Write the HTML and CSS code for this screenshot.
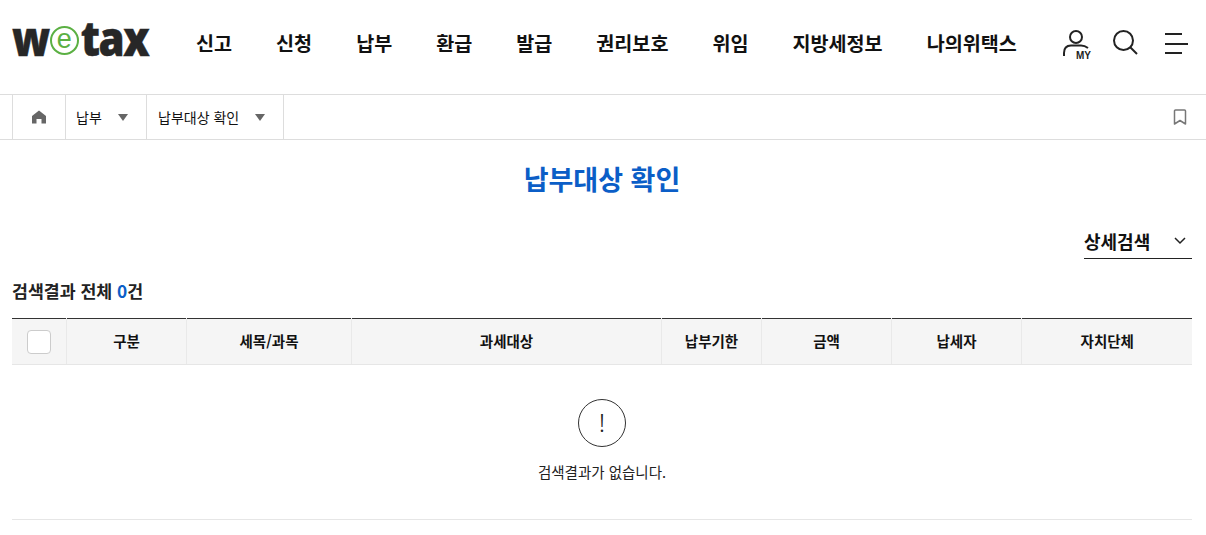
FILE: index.html
```html
<!DOCTYPE html>
<html lang="ko">
<head>
    <meta charset="UTF-8">
    <meta name="viewport" content="width=device-width, initial-scale=1.0">
    <title>납부대상 확인</title>
    <link rel="stylesheet" href="styles.css">
</head>
<body>
    <header class="header">
        <a class="logo"><span class="logo-txt">w</span><span class="logo-e">e</span><span class="logo-txt">tax</span></a>
        <nav class="gnb">
            <a>신고</a>
            <a>신청</a>
            <a>납부</a>
            <a>환급</a>
            <a>발급</a>
            <a>권리보호</a>
            <a>위임</a>
            <a>지방세정보</a>
            <a>나의위택스</a>
        </nav>
        <div class="util">
            <a class="util-my">
                <svg width="32" height="32" viewBox="0 0 32 32" fill="none" stroke="#222" stroke-width="2">
                    <circle cx="13" cy="8" r="6"/>
                    <path d="M1 27v-3c0-5 3-7.500 7-7.500h10c3 0 5 1 7 2.500"/>
                </svg>
                <span class="my-label">MY</span>
            </a>
            <a class="util-search">
                <svg width="26" height="26" viewBox="0 0 26 26" fill="none" stroke="#222" stroke-width="2">
                    <circle cx="10.500" cy="10.500" r="9.500"/>
                    <path d="M17.500 17.500l6.500 6.500"/>
                </svg>
            </a>
            <a class="util-menu">
                <span class="bar short"></span>
                <span class="bar"></span>
                <span class="bar short"></span>
            </a>
        </div>
    </header>

    <div class="crumbs">
        <a class="crumb crumb-home">
            <svg width="14" height="14" viewBox="0 0 14 14" fill="#666">
                <path d="M7 .5L14 6v7.500H9.500V9h-5v4.500H0V6z"/>
            </svg>
        </a>
        <a class="crumb crumb-one">납부<i class="arrow"></i></a>
        <a class="crumb crumb-two">납부대상 확인<i class="arrow"></i></a>
        <a class="bookmark">
            <svg width="14" height="16" viewBox="0 0 14 16" fill="none" stroke="#777" stroke-width="1.500" stroke-linejoin="round">
                <path d="M1.500 2a1 1 0 0 1 1-1h9a1 1 0 0 1 1 1v13L7 11.500 1.500 15z"/>
            </svg>
        </a>
    </div>

    <main class="content">
        <h1 class="page-title">납부대상 확인</h1>

        <div class="search-toggle-row">
            <a class="search-toggle">
                상세검색
                <svg width="12" height="8" viewBox="0 0 12 8" fill="none" stroke="#222" stroke-width="1.500">
                    <path d="M1 1l5 5 5-5"/>
                </svg>
            </a>
        </div>

        <p class="result-count">검색결과 전체 <em>0</em>건</p>

        <table class="result-table">
            <colgroup>
                <col class="c-check">
                <col class="c-type">
                <col class="c-item">
                <col class="c-target">
                <col class="c-date">
                <col class="c-amount">
                <col class="c-payer">
                <col>
            </colgroup>
            <thead>
                <tr>
                    <th><span class="check"></span></th>
                    <th>구분</th>
                    <th>세목/과목</th>
                    <th>과세대상</th>
                    <th>납부기한</th>
                    <th>금액</th>
                    <th>납세자</th>
                    <th>자치단체</th>
                </tr>
            </thead>
        </table>

        <div class="empty">
            <div class="empty-icon">!</div>
            <p>검색결과가 없습니다.</p>
        </div>
    </main>
</body>
</html>
```

FILE: styles.css
```css
* {
    box-sizing: border-box;
}
body {
    margin: 0;
    background: #fff;
    color: #222;
    font-family: "Noto Sans CJK KR", "Noto Sans", sans-serif;
    overflow: hidden;
}
a {
    color: inherit;
    text-decoration: none;
}

/* header */
.header {
    display: flex;
    align-items: center;
    height: 95px;
    padding: 0 18px 10px 12px;
    border-bottom: 1px solid #ddd;
}
.logo {
    display: flex;
    align-items: center;
    width: 184px;
    margin-top: -8px;
    font-family: "Open Sans", sans-serif;
    font-size: 42px;
    font-weight: 800;
    line-height: 50px;
    letter-spacing: -1.500px;
    color: #272727;
}
.logo-txt {
    display: inline-block;
    transform: scaleY(1.150);
    -webkit-text-stroke: 0.400px #272727;
}
.logo-e {
    width: 29px;
    height: 29px;
    margin: 5px 2px 0 1px;
    border: 2px solid #5bb043;
    border-radius: 50%;
    color: #5bb043;
    font-family: "Liberation Sans", sans-serif;
    font-size: 27px;
    font-weight: 400;
    line-height: 23px;
    letter-spacing: 0;
    text-align: center;
}
.gnb {
    display: flex;
    gap: 44px;
    font-size: 19.600px;
    font-weight: 700;
    color: #111;
    white-space: nowrap;
}
.util {
    display: flex;
    align-items: center;
    margin-left: auto;
}
.util-my {
    position: relative;
    display: block;
    width: 32px;
    height: 32px;
    margin-top: 5px;
}
.my-label {
    position: absolute;
    right: 4px;
    bottom: 1px;
    padding-left: 2px;
    background: #fff;
    font-family: "Liberation Sans", sans-serif;
    font-size: 10px;
    font-weight: 700;
    line-height: 9px;
}
.util-search {
    display: block;
    height: 26px;
    margin-left: 18px;
    margin-top: 2px;
}
.util-menu {
    display: flex;
    flex-direction: column;
    gap: 7.500px;
    width: 23px;
    margin-left: 26px;
    margin-top: 3px;
}
.bar {
    height: 2px;
    background: #222;
}
.bar.short {
    width: 17px;
}

/* breadcrumb */
.crumbs {
    display: flex;
    height: 45px;
    padding: 0 19px 0 12px;
    border-bottom: 1px solid #ddd;
    font-size: 14px;
    color: #111;
}
.crumb {
    display: flex;
    align-items: center;
    border-left: 1px solid #ddd;
}
.crumb-home {
    justify-content: center;
    width: 53px;
}
.crumb-one {
    width: 81px;
    padding-left: 10px;
}
.crumb-two {
    width: 138px;
    padding-left: 11px;
    border-right: 1px solid #ddd;
}
.arrow {
    width: 0;
    height: 0;
    margin-left: 16px;
    margin-top: 1px;
    border-top: 7px solid #666;
    border-left: 5.500px solid transparent;
    border-right: 5.500px solid transparent;
}
.bookmark {
    display: flex;
    align-items: center;
    margin-left: auto;
}

/* content */
.content {
    padding: 0 14px 0 12px;
}
.page-title {
    margin: 0;
    padding-top: 19px;
    color: #0b5ec7;
    font-size: 27px;
    font-weight: 700;
    line-height: 40px;
    text-align: center;
}
.search-toggle-row {
    display: flex;
    justify-content: flex-end;
    margin-top: 24px;
}
.search-toggle {
    display: flex;
    align-items: center;
    justify-content: space-between;
    width: 108px;
    height: 36px;
    border-bottom: 1px solid #222;
    font-size: 18px;
    font-weight: 700;
    color: #111;
}
.search-toggle svg {
    margin-right: 6px;
}
.result-count {
    margin: 20px 0 0;
    font-size: 17.300px;
    font-weight: 700;
    line-height: 24px;
}
.result-count em {
    color: #0b5ec7;
    font-style: normal;
}
.result-table {
    width: 100%;
    margin-top: 15px;
    border-collapse: collapse;
    table-layout: fixed;
    border-top: 1px solid #333;
}
.c-check { width: 54px; }
.c-type { width: 120px; }
.c-item { width: 165px; }
.c-target { width: 310px; }
.c-date { width: 100px; }
.c-amount { width: 130px; }
.c-payer { width: 130px; }
.result-table th {
    height: 46px;
    padding: 0 0 3px 1px;
    background: #f5f5f5;
    border-bottom: 1px solid #e6e6e6;
    border-left: 1px solid #e9e9e9;
    font-size: 14.500px;
    font-weight: 700;
    color: #111;
}
.result-table th:first-child {
    border-left: 0;
    padding: 0;
}
.check {
    display: block;
    width: 24px;
    height: 24px;
    margin: 0 auto;
    background: #fff;
    border: 1px solid #ccc;
    border-radius: 4px;
}
.empty {
    padding: 34px 0 36px;
    border-bottom: 1px solid #e6e6e6;
    text-align: center;
}
.empty-icon {
    width: 48px;
    height: 48px;
    margin: 0 auto;
    border: 1px solid #333;
    border-radius: 50%;
    font-family: "Noto Sans", sans-serif;
    font-size: 26px;
    font-weight: 300;
    line-height: 44px;
}
.empty p {
    margin: 14px 0 0;
    font-size: 14.500px;
    line-height: 22px;
}
```
